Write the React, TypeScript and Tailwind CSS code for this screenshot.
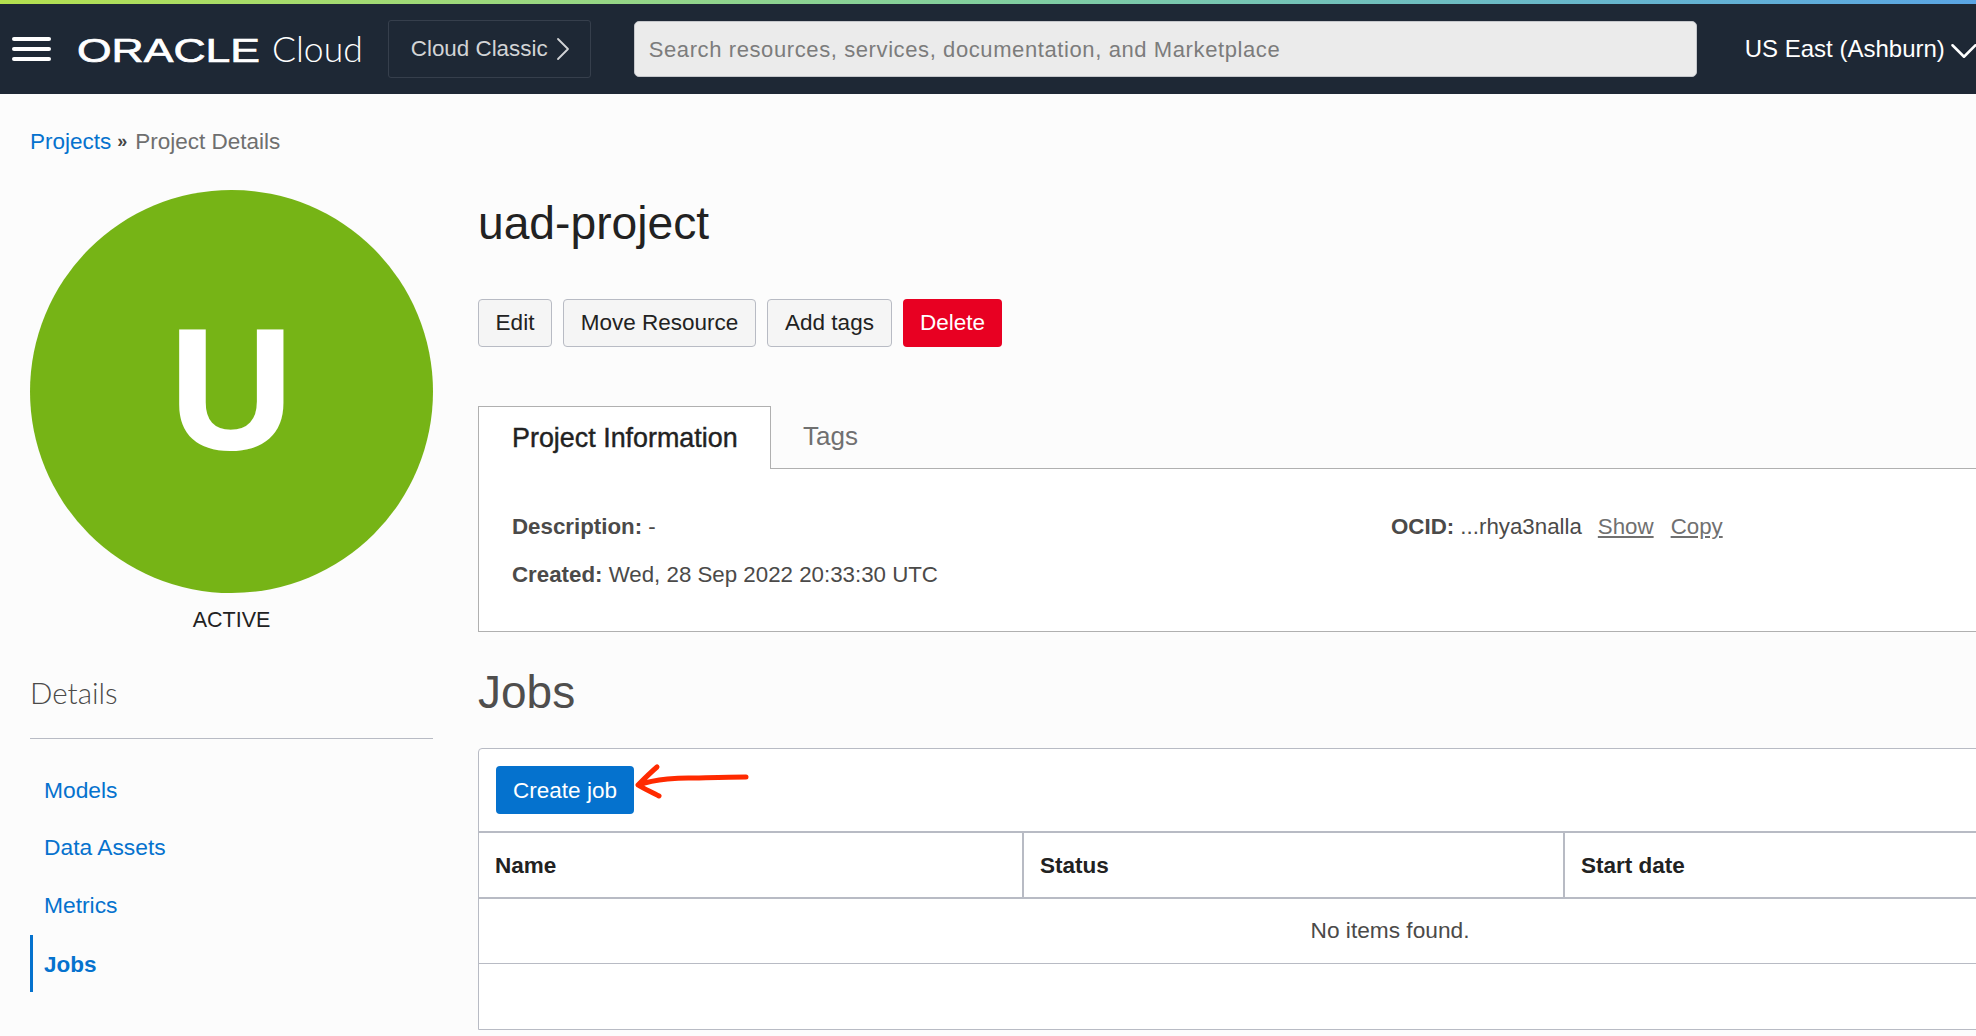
import { ChevronDown, ChevronRight } from 'lucide-react'

const navItems = [
  { label: 'Models', active: false },
  { label: 'Data Assets', active: false },
  { label: 'Metrics', active: false },
  { label: 'Jobs', active: true },
]

const actions = [
  { label: 'Edit', width: 'w-[74px]' },
  { label: 'Move Resource', width: 'w-[193px]' },
  { label: 'Add tags', width: 'w-[125px]' },
]

function OracleLogo() {
  return (
    <svg width="183" height="30" viewBox="0 0 183 30" className="block shrink-0 overflow-visible">
      <text
        x="0"
        y="28"
        fill="#fff"
        stroke="#fff"
        strokeWidth="0.7"
        fontFamily="'Liberation Sans', sans-serif"
        fontSize="34"
        textLength="183"
        lengthAdjust="spacingAndGlyphs"
      >
        ORACLE
      </text>
    </svg>
  )
}

function Header() {
  return (
    <header className="shrink-0">
      <div className="h-[4px] bg-gradient-to-r from-[#b4e04e] via-[#82cf9e] to-[#5aa5e4]" />
      <div className="flex h-[90px] items-center whitespace-nowrap bg-[#1e2835] text-white">
        <div className="ml-[12px] flex w-[39px] shrink-0 flex-col gap-[6px]">
          <span className="h-[4px] rounded-full bg-white" />
          <span className="h-[4px] rounded-full bg-white" />
          <span className="h-[4px] rounded-full bg-white" />
        </div>
        <div className="ml-[26px] flex shrink-0 items-center">
          <OracleLogo />
          <span className="ml-[12px] font-['Lato',sans-serif] text-[35.5px] font-light leading-none">Cloud</span>
        </div>
        <button className="ml-[25px] flex h-[58px] w-[203px] shrink-0 items-center rounded-[3px] border border-[#363f4c] pl-[22px] text-[22.4px] text-[#d2d4d6]">
          Cloud Classic
          <ChevronRight size={40} strokeWidth={1.1} className="-ml-[5px] shrink-0" />
        </button>
        <div className="ml-[43px] flex h-[56px] w-[1063px] shrink-0 items-center rounded-[5px] border border-[#c5c7cb] bg-[#ebebeb] px-[14px] pt-[1px] text-[22px] tracking-[0.6px] text-[#7c7c7c]">
          Search resources, services, documentation, and Marketplace
        </div>
        <span className="ml-[48px] shrink-0 text-[24px]">US East (Ashburn)</span>
        <ChevronDown size={46} strokeWidth={1.3} className="-ml-[4px] mt-[4px] shrink-0" />
      </div>
    </header>
  )
}

function Sidebar() {
  return (
    <aside className="w-[403px] shrink-0">
      <div className="flex h-[403px] w-[403px] items-center justify-center rounded-full bg-[#76b416] pb-[5px] text-[170px] font-bold leading-none text-white [-webkit-text-stroke:2px_#fff]">
        U
      </div>
      <div className="mt-[14px] text-center text-[21.5px] leading-[26px] text-[#222]">ACTIVE</div>
      <h2 className="mt-[42px] font-['Lato',sans-serif] text-[29.5px] font-light leading-[36px] text-[#4b4a49]">Details</h2>
      <div className="mt-[27px] h-px bg-[#b8bbc4]" />
      <nav className="mt-[22px] flex flex-col">
        {navItems.map((item) => (
          <a
            key={item.label}
            className={
              item.active
                ? 'mt-[1px] flex h-[57px] items-center border-l-[3px] border-[#0572ce] pl-[11px] pt-[3px] text-[22.5px] font-bold text-[#0572ce]'
                : 'flex h-[57.5px] items-center pl-[14px] text-[22.8px] text-[#0572ce]'
            }
          >
            {item.label}
          </a>
        ))}
      </nav>
    </aside>
  )
}

function InfoPanel() {
  return (
    <>
      <div className="flex h-[62px] items-end border-b border-[#b0b0b0]">
        <div className="-mb-px flex h-[63px] w-[293px] items-center border border-b-0 border-[#b0b0b0] bg-white pl-[33px] text-[26.9px] text-[#222] [-webkit-text-stroke:0.4px_#222]">
          Project Information
        </div>
        <div className="flex h-[62px] items-center pb-[1px] pl-[32px] text-[26px] text-[#707070]">Tags</div>
      </div>
      <div className="h-[163px] border-x border-b border-[#b0b0b0] bg-white pl-[33px] pt-[45px] text-[22.3px] leading-[26px] text-[#4b4a49]">
        <div className="flex">
          <div className="w-[879px]">
            <b>Description:</b> -
          </div>
          <div>
            <b>OCID:</b> ...rhya3nalla
            <a className="ml-[16px] text-[#707070] underline">Show</a>
            <a className="ml-[17px] text-[#707070] underline">Copy</a>
          </div>
        </div>
        <div className="mt-[22px]">
          <b>Created:</b> Wed, 28 Sep 2022 20:33:30 UTC
        </div>
      </div>
    </>
  )
}

function JobsTable() {
  return (
    <div className="mt-[31px] h-[282px] rounded-t-[4px] border border-[#b8bbc4] bg-white text-[22.5px]">
      <div className="flex h-[82px] items-start pl-[17px] pt-[17px]">
        <button className="h-[48px] w-[138px] rounded-[4px] bg-[#0572ce] pt-[1px] text-white">Create job</button>
      </div>
      <div className="grid h-[68px] grid-cols-[543px_541px_1fr] border-y-2 border-[#b8bbc4] font-bold text-[#222]">
        <div className="flex items-center pl-[16px] pt-[2px]">Name</div>
        <div className="flex items-center border-l-2 border-[#b8bbc4] pl-[16px] pt-[2px]">Status</div>
        <div className="flex items-center border-l-2 border-[#b8bbc4] pl-[16px] pt-[2px]">Start date</div>
      </div>
      <div className="flex h-[65px] items-center justify-center border-b border-[#b8bbc4] pb-[2px] text-[22.7px] text-[#4b4a49]">
        No items found.
      </div>
    </div>
  )
}

function RedArrow() {
  // hand-drawn annotation pointing at the Create job button
  return (
    <svg width="120" height="40" viewBox="0 0 120 40" fill="none" className="absolute left-[632px] top-[762px]">
      <path
        d="M114 15C96 15 82 15.5 62 16C48 15.5 24 17 6 23M25 5C18 11 12 17 6 23C12 27 20 30 27 34"
        stroke="#ff2a00"
        strokeWidth="5"
        strokeLinecap="round"
        strokeLinejoin="round"
      />
    </svg>
  )
}

export default function App() {
  return (
    <div className="relative h-[1036px] w-[1976px] overflow-hidden bg-[#fcfcfc] font-['Liberation_Sans',Arial,sans-serif] text-[#4b4a49]">
      <Header />
      <div className="pl-[30px] pt-[35px]">
        <div className="flex items-center text-[22.5px] leading-[26px]">
          <a className="text-[#0572ce]">Projects</a>
          <span className="ml-[6px] -translate-y-[1px] text-[18px] font-bold text-[#444]">»</span>
          <span className="ml-[8px] text-[#6f6f6f]">Project Details</span>
        </div>
        <div className="mt-[35px] flex">
          <Sidebar />
          <main className="ml-[45px] w-[1824px] shrink-0 pt-[8px]">
            <h1 className="text-[46.2px] leading-[50px] text-[#222]">uad-project</h1>
            <div className="mt-[51px] flex gap-[11px] text-[22.5px]">
              {actions.map((action) => (
                <button key={action.label} className={`${action.width} h-[48px] rounded-[4px] border border-[#b8bbc4] bg-[#f5f5f5] text-[#222]`}>
                  {action.label}
                </button>
              ))}
              <button className="h-[48px] w-[99px] rounded-[4px] bg-[#e80022] text-white">Delete</button>
            </div>
            <div className="mt-[60px]">
              <InfoPanel />
            </div>
            <h2 className="mt-[35px] text-[46px] leading-[50px] text-[#4f4e4d]">Jobs</h2>
            <JobsTable />
          </main>
        </div>
      </div>
      <RedArrow />
    </div>
  )
}
